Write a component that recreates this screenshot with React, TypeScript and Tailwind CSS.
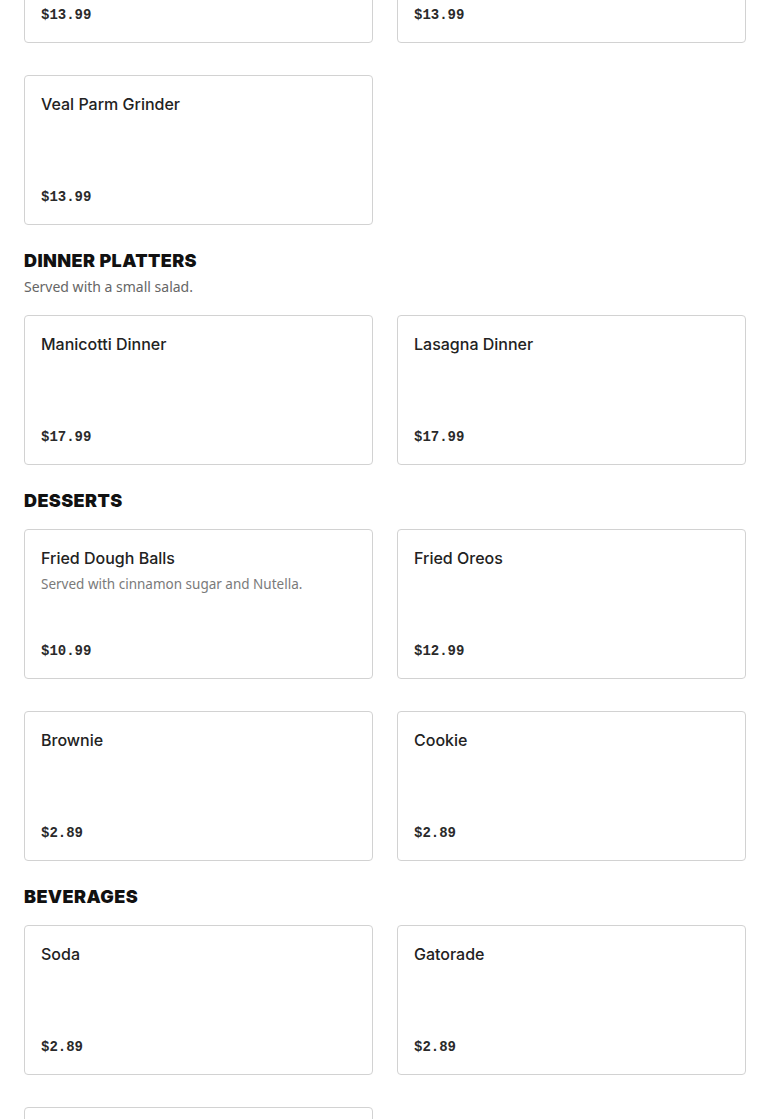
import React from "react";

type Item = { name: string; price: string; desc?: string };
type Section = { title?: string; desc?: string; items: Item[] };

const sections: Section[] = [
  {
    items: [
      { name: "Chicken Parm Grinder", price: "$13.99" },
      { name: "Eggplant Parm Grinder", price: "$13.99" },
      { name: "Veal Parm Grinder", price: "$13.99" },
    ],
  },
  {
    title: "DINNER PLATTERS",
    desc: "Served with a small salad.",
    items: [
      { name: "Manicotti Dinner", price: "$17.99" },
      { name: "Lasagna Dinner", price: "$17.99" },
    ],
  },
  {
    title: "DESSERTS",
    items: [
      { name: "Fried Dough Balls", price: "$10.99", desc: "Served with cinnamon sugar and Nutella." },
      { name: "Fried Oreos", price: "$12.99" },
      { name: "Brownie", price: "$2.89" },
      { name: "Cookie", price: "$2.89" },
    ],
  },
  {
    title: "BEVERAGES",
    items: [
      { name: "Soda", price: "$2.89" },
      { name: "Gatorade", price: "$2.89" },
      { name: "Water", price: "$1.99" },
    ],
  },
];

function Card({ item }: { item: Item }) {
  return (
    <div className="h-[150px] rounded-[4px] border border-[#d2d2d2] bg-white px-4 pt-4 pb-[17px] flex flex-col justify-between">
      <div>
        <div className="font-['Inter',sans-serif] text-[16px] leading-6 font-medium text-[#222]">
          {item.name}
        </div>
        {item.desc && (
          <div className="mt-[4px] font-['Noto_Sans',sans-serif] text-[13.5px] leading-5 text-[#7a7a7a]">
            {item.desc}
          </div>
        )}
      </div>
      <div className="font-['Liberation_Mono',monospace] text-[14px] leading-5 font-bold text-[#2a2a2a]">
        {item.price}
      </div>
    </div>
  );
}

function SectionBlock({ s }: { s: Section }) {
  return (
    <div>
      {s.title && (
        <div className="mb-4">
          <div className="font-['Inter',sans-serif] text-[18px] leading-6 font-black tracking-[0.4px] text-[#111]">
            {s.title}
          </div>
          {s.desc && (
            <div className="mt-[4px] pb-[2px] font-['Noto_Sans',sans-serif] text-[14px] leading-5 text-[#666]">
              {s.desc}
            </div>
          )}
        </div>
      )}
      <div className="grid grid-cols-2 gap-x-6 gap-y-8">
        {s.items.map((it, j) => (
          <Card key={j} item={it} />
        ))}
      </div>
    </div>
  );
}

export default function App() {
  return (
    <div className="bg-white min-h-screen overflow-hidden">
      <div className="px-6 mt-[-107px] flex flex-col gap-6">
        {sections.map((s, i) => (
          <SectionBlock key={i} s={s} />
        ))}
      </div>
    </div>
  );
}
